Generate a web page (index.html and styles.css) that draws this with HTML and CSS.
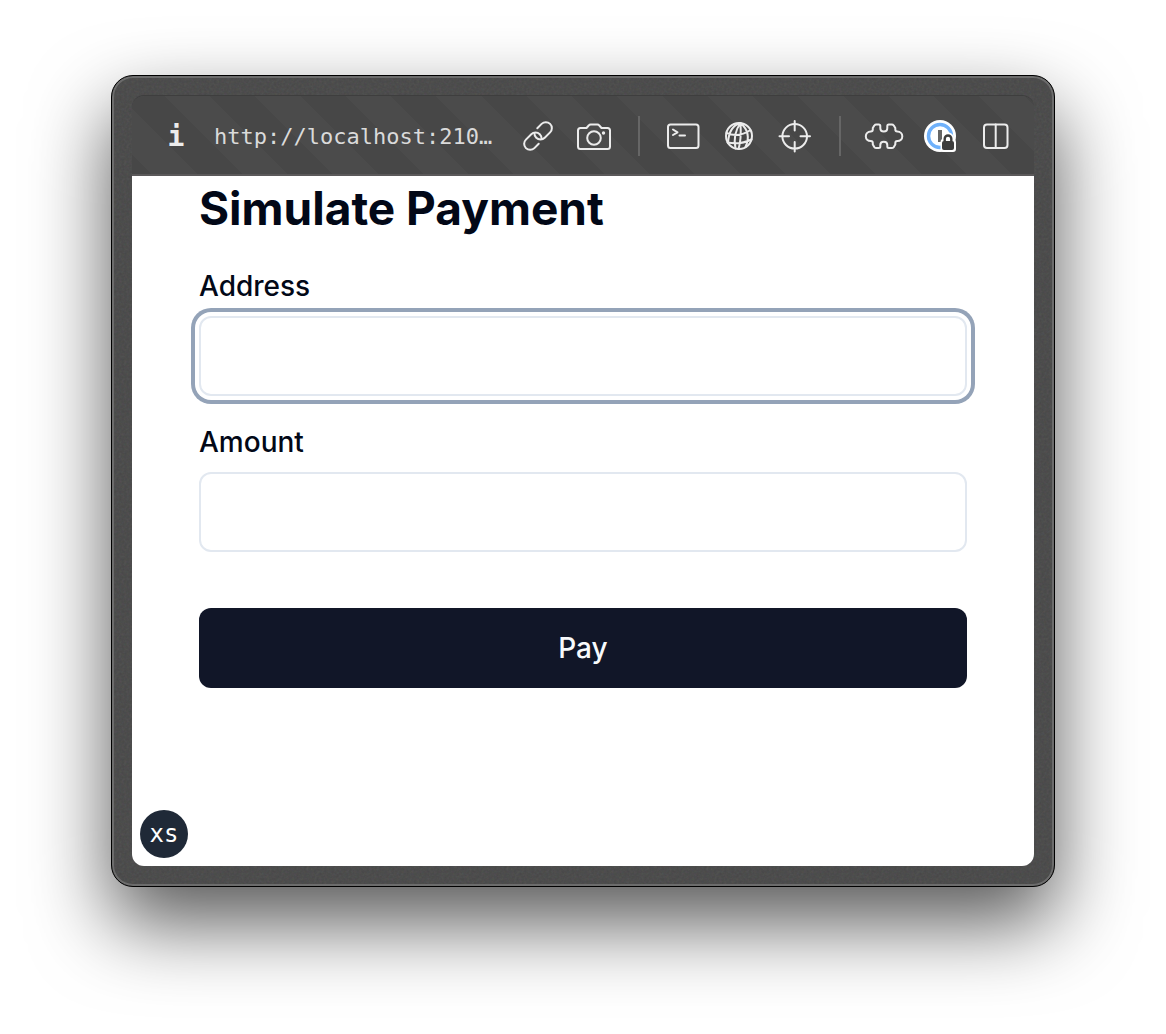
FILE: index.html
```html
<!DOCTYPE html>
<html lang="en">
<head>
<meta charset="utf-8">
<meta name="viewport" content="width=device-width, initial-scale=1">
<title>Simulate Payment</title>
<link rel="stylesheet" href="styles.css">
</head>
<body>
<div class="window">
  <header class="toolbar">
    <button class="tool info" type="button" aria-label="Page information">i</button>
    <input class="url" type="text" aria-label="Address bar" value="http://localhost:210…" readonly>
    <button class="tool" type="button" aria-label="Copy link">
      <svg class="icon" viewBox="0 0 40 40"><g transform="rotate(-45 20 20)"><path d="M15 26H8.900a6 6 0 0 1 0-12h7.600a6 6 0 0 1 6 6q0 2.800-2 4.600"/><path d="M25 14h6.100a6 6 0 0 1 0 12h-7.600a6 6 0 0 1-6-6q0-2.800 2-4.600"/></g></svg>
    </button>
    <button class="tool" type="button" aria-label="Take screenshot">
      <svg class="icon" viewBox="0 0 40 40"><path d="M6.500 12h6l2.200-2.500q.7-1 2-1h6.600q1.300 0 2 1l2.200 2.500h6q2.500 0 2.500 2.500v16q0 2.500-2.500 2.500h-27q-2.500 0-2.500-2.500v-16q0-2.500 2.500-2.500z"/><circle cx="20" cy="22" r="6.800"/><circle class="solid" cx="29.500" cy="17" r="1.700"/></svg>
    </button>
    <span class="divider"></span>
    <button class="tool" type="button" aria-label="Console">
      <svg class="icon" viewBox="0 0 40 40"><rect x="5" y="8.500" width="30.500" height="23.500" rx="2.500"/><path d="M10 13.500l4.500 2.800-4.500 2.700M16.500 19.500h5.500"/></svg>
    </button>
    <button class="tool" type="button" aria-label="Network">
      <svg class="icon" viewBox="0 0 40 40"><circle cx="20" cy="20" r="13"/><path d="M21.500 7Q13.500 18 16.500 32.500M21.500 7Q22.500 24 19.500 33M21.500 7Q33 17 26.500 31M21.500 7Q10 10 9 27M7.500 17Q20 22 31.500 14M8.500 26.500Q21 29 32.500 23.500"/></svg>
    </button>
    <button class="tool" type="button" aria-label="Select element">
      <svg class="icon" viewBox="0 0 40 40"><circle cx="19.700" cy="20.300" r="12.300"/><path d="M19.700 5v9.500M19.700 26v9.500M4.500 20.300h9.500M25.500 20.300h9.500"/></svg>
    </button>
    <span class="divider"></span>
    <button class="tool" type="button" aria-label="Extensions">
      <svg class="icon" viewBox="0 0 40 40"><path d="M8.500 11.500l1.500-2.500q.8-1 2-1h2.500q1.500 0 1.500 1.500v2q0 3.500 3.500 3.500t3.500-3.500v-2q0-1.500 1.500-1.500h3q1.200 0 2 1l1.500 2.500v1.500q0 2 2 2c3 0 5 2 5 4.800s-2 4.800-5 4.800q-2 0-2 2v1.500l-1.500 2.500q-.8 1-2 1h-3q-1.500 0-1.500-1.500v-1.500q0-3.300-3.500-3.300t-3.500 3.300v1.500q0 1.500-1.500 1.500h-2.500q-1.200 0-2-1l-1.500-2.500v-1.500q0-2-2-2c-3 0-5-2-5-4.800s2-4.800 5-4.800q2 0 2-2z" transform="translate(.3 .5)"/></svg>
    </button>
    <button class="tool" type="button" aria-label="Password manager">
      <svg class="vault" viewBox="0 0 40 40"><circle cx="20" cy="20" r="16" fill="#fff"/><circle cx="20" cy="20" r="11.500" fill="#fff" stroke="#6fb1fb" stroke-width="3.500"/><path d="M18 14h4v12h-4z" fill="#666"/><path d="M20.500 26q0-2 1.500-3c0-4 2.500-6.500 6-6.500s6 2.500 6 6.500q2 1 2 3v7q0 3-3 3h-9.500q-3 0-3-3z" fill="#fff"/><rect x="22" y="25" width="12" height="9" rx="2" fill="#3d3d3d"/><path d="M24.700 25.500v-2.700a3.300 3.300 0 0 1 6.600 0v2.700" fill="none" stroke="#3d3d3d" stroke-width="2.400"/></svg>
    </button>
    <button class="tool" type="button" aria-label="Split view">
      <svg class="icon" viewBox="0 0 40 40"><rect x="8" y="8.500" width="23.500" height="23.500" rx="3"/><path d="M19.700 8.500v23.500"/></svg>
    </button>
  </header>
  <main class="page">
    <form class="payment">
      <h1 class="title">Simulate Payment</h1>
      <div class="field">
        <label class="label" for="address">Address</label>
        <input class="input input-active" id="address" name="address" type="text">
      </div>
      <div class="field">
        <label class="label" for="amount">Amount</label>
        <input class="input" id="amount" name="amount" type="text">
      </div>
      <button class="pay" type="submit">Pay</button>
    </form>
    <div class="breakpoint">xs</div>
  </main>
</div>
</body>
</html>
```
FILE: styles.css
```css
* {
  box-sizing: border-box;
}

body {
  display: flex;
  min-height: 100vh;
  margin: 0;
  padding: 75px 111px 147px;
  background: #fff;
  color: #020817;
  font-family: Inter, "Liberation Sans", sans-serif;
}

/* Window frame */
.window {
  display: flex;
  flex: 1;
  flex-direction: column;
  min-width: 0;
  padding: 20px;
  border: 1px solid #000;
  border-radius: 22px;
  background-color: #464646;
  background-image: url("data:image/svg+xml,%3Csvg xmlns='http://www.w3.org/2000/svg' width='200' height='200'%3E%3Cfilter id='n'%3E%3CfeTurbulence type='fractalNoise' baseFrequency='.4' numOctaves='2' stitchTiles='stitch'/%3E%3C/filter%3E%3Crect width='200' height='200' filter='url(%23n)' opacity='.1'/%3E%3C/svg%3E");
  box-shadow: inset 0 0 0 2px #6c6c6c, 0 36px 80px rgba(0, 0, 0, 0.66);
}

/* Toolbar */
.toolbar {
  display: flex;
  align-items: center;
  height: 80px;
  padding: 2px 10px 0 16px;
  border-bottom: 2px solid #5b595a;
  border-radius: 12px 12px 0 0;
  background: repeating-linear-gradient(45deg, #474747 0 14px, #4b4b4b 14px 46px, #474747 46px 64px);
  box-shadow: 0 -1px 0 #3e3e3e;
}

.tool {
  display: flex;
  flex: none;
  align-items: center;
  justify-content: center;
  width: 56px;
  height: 56px;
  padding: 0;
  border: 0;
  background: none;
  color: #ececec;
}

.info {
  padding-top: 2px;
  font: bold 28px/40px "DejaVu Sans Mono", monospace;
}

.url {
  flex: 1;
  min-width: 0;
  padding: 2px 0 0 10px;
  border: 0;
  outline: 0;
  background: none;
  color: #dadada;
  font: 22px/40px "DejaVu Sans Mono", monospace;
}

.icon {
  width: 40px;
  height: 40px;
  overflow: visible;
  fill: none;
  stroke: currentColor;
  stroke-width: 2;
  stroke-linecap: round;
  stroke-linejoin: round;
}

.solid {
  fill: currentColor;
  stroke: none;
}

.vault {
  width: 40px;
  height: 40px;
}

.divider {
  flex: none;
  width: 2px;
  height: 40px;
  margin: 0 15px 0 16px;
  background: #666;
}

/* Page */
.page {
  position: relative;
  flex: 1;
  padding: 8px 24px 64px;
  border-radius: 0 0 12px 12px;
  background: #fff;
}

.payment {
  display: flex;
  flex-direction: column;
  gap: 32px;
  max-width: 768px;
  margin: 0 auto;
}

.title {
  margin: 0 0 8px;
  font-size: 46px;
  font-weight: 700;
  line-height: 48px;
}

.field {
  display: flex;
  flex-direction: column;
  gap: 16px;
}

.label {
  font-size: 28px;
  font-weight: 500;
  line-height: 28px;
}

.input {
  width: 100%;
  height: 80px;
  padding: 0 24px;
  border: 2px solid #e2e8f0;
  border-radius: 12px;
  outline: 0;
  background: #fff;
  color: inherit;
  font: 28px/40px Inter, "Liberation Sans", sans-serif;
}

.input-active,
.input:focus-visible {
  box-shadow: 0 0 0 4px #fff, 0 0 0 8px #94a3b8;
}

.pay {
  height: 80px;
  margin-top: 24px;
  border: 0;
  border-radius: 12px;
  background: #111628;
  color: #f8fafc;
  font: 500 28px/40px Inter, "Liberation Sans", sans-serif;
}

/* Badge naming the current breakpoint */
.breakpoint {
  position: absolute;
  bottom: 8px;
  left: 8px;
  width: 48px;
  height: 48px;
  border-radius: 50%;
  background: #1f2937;
  color: #fff;
  font: 24px/48px "DejaVu Sans Mono", monospace;
  text-align: center;
}
```
